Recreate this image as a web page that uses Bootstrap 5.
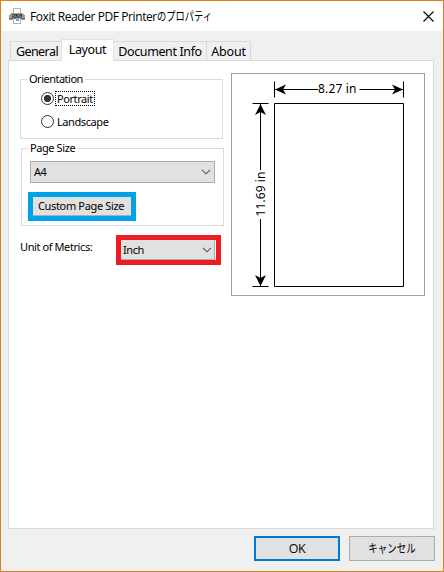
<!DOCTYPE html>
<html lang="ja">
<head>
<meta charset="utf-8">
<title>Foxit Reader PDF Printerのプロパティ</title>
<link href="https://cdn.jsdelivr.net/npm/bootstrap@5.3.0/dist/css/bootstrap.min.css" rel="stylesheet">
<style>
body{font-family:"Noto Sans","Noto Sans CJK JP",sans-serif;font-size:11px;line-height:14px;letter-spacing:-.41px;color:#000}
.dialog{width:444px;height:572px;border:1px solid #d9821b;background:#f0f0f0;white-space:nowrap}
.titlebar{height:30px;padding:0 9px 0 8px}
.caption{font:12px/16px "Open Sans","Noto Sans CJK JP",sans-serif;letter-spacing:-.41px;color:#000;margin-left:4px}
.kana{display:inline-block;transform:scaleX(.77);transform-origin:0 50%;letter-spacing:0;font-family:"Noto Sans CJK JP",sans-serif}
.tabs{height:22px;margin:8px 0 -1px 9px;position:relative;border:0;font-size:12.5px;letter-spacing:-.38px;flex-wrap:nowrap}
.tabs .nav-link{border:1px solid #d9d9d9;border-left-width:0;border-radius:0;color:#000;padding:0;height:20px;line-height:19px;text-align:center;background:#f0f0f0;margin:0}
.tabs .nav-link.active{height:22px;background:#fff;border-left-width:1px;border-bottom-color:#fff;line-height:20px;color:#000}
.tabs .t1{width:51px;border-left-width:1px;border-right-width:0;letter-spacing:-.55px;padding-left:2px}
.tabs .t2{width:53px}.tabs .t3{width:93px}.tabs .t4{width:44px;letter-spacing:-.2px}
.sheet{height:469px;margin:0 9px 0 7px;border:1px solid #d9d9d9;background:#fff;padding:12px 8px 0 11px}
.left{width:211px}
.group{border:1px solid #dcdcdc;width:203px}
.group>legend{float:none;width:auto;font-size:11px;line-height:14px;margin:-7px 0 0 6px;padding:0 2px;background:#fff}
.g1{height:67px;margin-top:-1px}.g1>legend{letter-spacing:-.5px}
.g2{height:85px;margin:2px 0 0 1px}
.opt{height:15px;margin:5px 0 0 20px}
.opt+.opt{margin-top:8px}
.opt .form-check-input{width:13px;height:13px;margin:0 1px 0 0;border:1px solid #333;background:#fff;box-shadow:none;flex:none}
.opt .form-check-input:checked{background:radial-gradient(circle at center,#333 0 3.3px,#fff 3.9px)}
.opt label{padding:0 1px;height:15px;line-height:13px;border:1px dotted transparent}
.opt .focused{border-color:#000}
.pick{background:#e1e1e1;border:1px solid #adadad;height:22px;padding:0 3px}
.pagepick{width:185px;margin:6px 0 0 8px}
.mark-blue{width:108px;height:29px;border:5px solid #00a2e8;margin:9px 0 0 6px}
.mark-blue .btn{width:98px;height:19px;background:#e1e1e1;border:0;border-bottom:1px solid #adadad;border-radius:0;padding:0 0 1px 5px;font-size:11px;line-height:17px;letter-spacing:-.35px;color:#000;text-align:left}
.unit{margin-top:9px}
.unit-label{padding-top:5px}
.mark-red{width:105px;height:30px;border:5px solid #ed1c24;margin-right:10px}
.mark-red .pick{height:20px;border-width:0 1px 1px 0;padding:0 2px;width:94px}
.preview{width:194px;height:223px;border:1px solid #a0a0a0}
.preview text{font:12px "Noto Sans",sans-serif;letter-spacing:0}
.actions{margin:7px 8px 0 0;gap:9px}
.actions .btn{width:86px;height:25px;background:#e1e1e1;border:1px solid #adadad;border-radius:0;padding:0;color:#000;font:12.5px/22px "Open Sans",sans-serif;letter-spacing:-.5px}
.actions .okay{border:2px solid #0078d7;line-height:21px}
.actions .kana{transform-origin:50% 50%;transform:scaleX(.79);font-size:12px}
</style>
<script src="https://cdn.jsdelivr.net/npm/bootstrap@5.3.0/dist/js/bootstrap.bundle.min.js"></script>
</head>
<body class="m-0 overflow-hidden">
<main class="dialog">
  <header class="titlebar d-flex align-items-center bg-white">
    <svg width="17" height="17" viewBox="0 0 17 17" shape-rendering="crispEdges">
      <path d="M4.500 6V.5h7V6" fill="#fff" stroke="#b4b4b4"/>
      <path d="M2 5h12v1h1v1h1v5H0V7h1V6h1z" fill="#9a9a9a"/>
      <path d="M3 6h10v4H3z" fill="#555d62"/>
      <path d="M4 7h1v1H4zM9 7h1v1H9z" fill="#d77a3c"/><path d="M6 8h1v1H6zM11 8h1v1h-1z" fill="#3f8fd0"/><path d="M7 7h1v1H7zM12 7h1v1h-1z" fill="#222"/>
      <path d="M0 10h16v1H0z" fill="#6d6d6d"/>
      <path d="M4.500 10.500h7v5h-7z" fill="#fff" stroke="#b0b0b0"/>
      <path d="M5 10h2v1H5z" fill="#287f9a"/><path d="M7 11h3v2H7z" fill="#47bac6"/>
    </svg>
    <span class="caption">Foxit Reader PDF Printer<span class="kana">のプロパティ</span></span>
    <svg class="ms-auto" width="11" height="11" viewBox="0 0 11 11"><path d="M.5.5l10 10M10.500.5L.5 10.500" stroke="#000" stroke-width="1.100"/></svg>
  </header>
  <nav class="nav nav-tabs tabs align-items-end">
    <a class="nav-link t1">General</a><a class="nav-link active t2">Layout</a><a class="nav-link t3">Document Info</a><a class="nav-link t4">About</a>
  </nav>
  <section class="sheet d-flex align-items-start">
    <div class="left">
      <fieldset class="group g1">
        <legend>Orientation</legend>
        <div class="opt d-flex align-items-center"><input class="form-check-input" type="radio" name="o" id="p" checked><label for="p" class="focused">Portrait</label></div>
        <div class="opt d-flex align-items-center"><input class="form-check-input" type="radio" name="o" id="l"><label for="l">Landscape</label></div>
      </fieldset>
      <fieldset class="group g2">
        <legend>Page Size</legend>
        <div class="pick pagepick d-flex align-items-center justify-content-between"><span>A4</span><svg width="10" height="6" viewBox="0 0 10 6"><path d="M1 .8l4 4 4-4" fill="none" stroke="#555" stroke-width="1.100"/></svg></div>
        <div class="mark-blue"><button class="btn d-block">Custom Page Size</button></div>
      </fieldset>
      <div class="unit d-flex">
        <span class="unit-label flex-grow-1">Unit of Metrics:</span>
        <div class="mark-red"><div class="pick d-flex align-items-center justify-content-between"><span>Inch</span><svg width="10" height="6" viewBox="0 0 10 6"><path d="M1 .8l4 4 4-4" fill="none" stroke="#555" stroke-width="1.100"/></svg></div></div>
      </div>
    </div>
    <div class="preview">
      <svg class="d-block" width="192" height="221" viewBox="232 74 192 221">
        <g fill="none" stroke="#000">
          <path d="M274.500 103.500h129v183h-129z"/>
          <path d="M274.500 81.500v16M403.500 81.500v16M275 89.500h43M359.500 89.500H403M252.500 103.500h16M252.500 286.500h16M260.500 104v66M260.500 219v67"/>
        </g>
        <path d="M275 89.500l11-5-3 5 3 5zM403 89.500l-11-5 3 5-3 5zM260.500 104l-5.500 11 5.500-3 5.500 3zM260.500 286l-5.500-11 5.500 3 5.500-3z"/>
        <text x="318" y="93" textLength="38.500">8.27 in</text>
        <text transform="translate(264.500 216.500) rotate(-90)" textLength="45">11.69 in</text>
      </svg>
    </div>
  </section>
  <footer class="actions d-flex justify-content-end">
    <button class="btn okay">OK</button><button class="btn"><span class="kana">キャンセル</span></button>
  </footer>
</main>
</body>
</html>
